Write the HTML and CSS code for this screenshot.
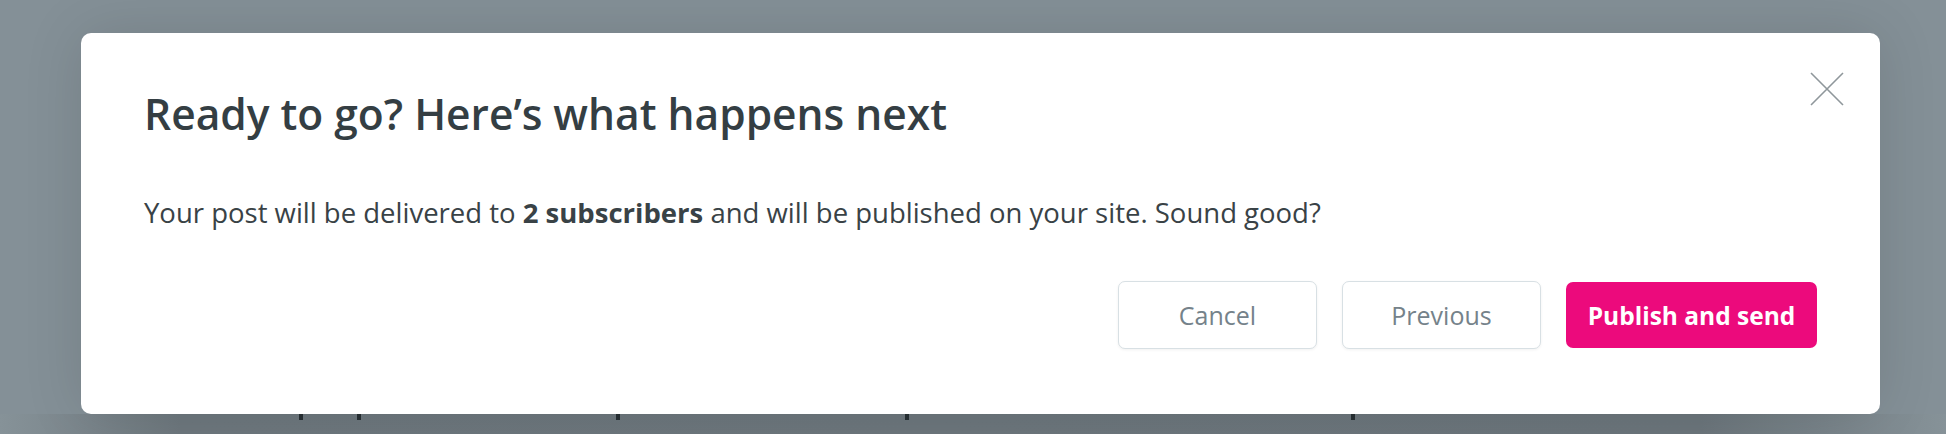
FILE: index.html
```html
<!DOCTYPE html>
<html>
  <head>
    <meta charset="UTF-8">
    <title>Publish</title>
    <link rel="stylesheet" href="styles.css">
  </head>
  <body>
    <div class="behind">
      <span class="mark m1"></span>
      <span class="mark m2"></span>
      <span class="mark m3"></span>
      <span class="mark m4"></span>
      <span class="mark m5"></span>
    </div>
    <div class="modal">
      <button class="close" aria-label="Close">
        <svg width="34" height="34" viewBox="0 0 34 34">
          <path d="M1 1 L33 33 M33 1 L1 33" stroke="#8f979b" stroke-width="1.6" fill="none" />
        </svg>
      </button>
      <h1 class="title">Ready to go? Here’s what happens next</h1>
      <p class="message">
        Your post will be delivered to <strong>2 subscribers</strong> and will be
        published on your site. Sound good?
      </p>
      <div class="actions">
        <button class="btn">Cancel</button>
        <button class="btn">Previous</button>
        <button class="btn primary">Publish and send</button>
      </div>
    </div>
  </body>
</html>
```

FILE: styles.css
```css
body {
  margin: 0;
  height: 434px;
  overflow: hidden;
  background-color: #849097;
  font-family: "Open Sans", Arial, sans-serif;
  position: relative;
}
.behind {
  position: absolute;
  left: 0;
  top: 414px;
  width: 100%;
  height: 20px;
  background: linear-gradient(to right, #869298 0, #6e787e 180px, #6c767c 1700px, #869298 1946px);
}
.mark {
  position: absolute;
  top: 0;
  width: 4px;
  height: 6px;
  background-color: #283034;
}
.m1 { left: 299px; }
.m2 { left: 357px; }
.m3 { left: 616px; }
.m4 { left: 905px; }
.m5 { left: 1351px; }
.modal {
  position: relative;
  margin: 33px 0 0 81px;
  width: 1799px;
  height: 381px;
  box-sizing: border-box;
  padding: 0 63px;
  background-color: #fff;
  border-radius: 10px;
  box-shadow: 0 0 60px rgba(0, 0, 0, 0.12);
}
.close {
  position: absolute;
  top: 39px;
  right: 36px;
  padding: 0;
  border: none;
  background: none;
  width: 34px;
  height: 34px;
}
.close svg {
  display: block;
}
.title {
  margin: 0;
  padding-top: 53px;
  font-size: 42.5px;
  line-height: 56px;
  font-weight: 600;
  color: #343e43;
}
.message {
  margin: 51px 0 0;
  font-size: 27.5px;
  line-height: 40px;
  color: #394246;
}
.message strong {
  font-weight: 700;
}
.actions {
  display: flex;
  justify-content: flex-end;
  gap: 25px;
  margin-top: 48px;
}
.btn {
  width: 199px;
  height: 68px;
  border: 1px solid #d8e0e4;
  border-radius: 7px;
  background-color: #fff;
  box-shadow: 0 1px 3px rgba(0, 0, 0, 0.06);
  font-family: "Open Sans", Arial, sans-serif;
  font-size: 25px;
  color: #75828a;
  padding: 0;
}
.primary {
  width: 251px;
  height: 66px;
  margin-top: 1px;
  border: none;
  background-color: #ec0a7c;
  color: #fff;
  font-weight: 700;
  font-size: 24.5px;
  box-shadow: none;
}
```
